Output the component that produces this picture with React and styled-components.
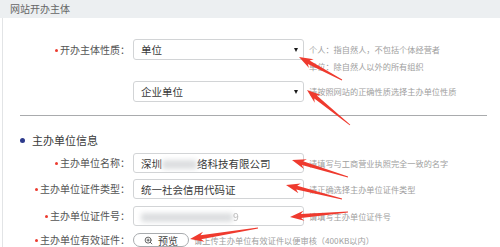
import React from 'react';
import styled, { createGlobalStyle } from 'styled-components';
import { ZoomIn } from 'lucide-react';

const GlobalStyle = createGlobalStyle`
  html, body {
    margin: 0;
    padding: 0;
    background: #fff;
  }
  body {
    font-family: "Noto Sans CJK SC", "Noto Sans", sans-serif;
    color: #333;
  }
`;

const Page = styled.div`
  position: relative;
  width: 500px;
  height: 247px;
  overflow: hidden;
  background: #fff;
`;

const Header = styled.div`
  height: 18px;
  line-height: 18px;
  padding-left: 10px;
  background: #eceff1;
  font-size: 10px;
  color: #666;
`;

const Panel = styled.div`
  margin-left: 2px;
  border-left: 1px solid #e2e4e6;
  height: 229px;
  padding-top: 21px;
  box-sizing: border-box;
`;

const Row = styled.div`
  display: grid;
  grid-template-columns: 127px 171px 1fr;
  column-gap: 3px;
  align-items: ${p => (p.$top ? 'start' : 'center')};
  margin-top: ${p => p.$mt || 0}px;
`;

const Label = styled.div`
  text-align: right;
  font-size: 10px;
  color: #555;
  line-height: ${p => p.$lh || 20}px;
  white-space: nowrap;

  &::before {
    content: '';
    display: ${p => (p.$required ? 'inline-block' : 'none')};
    width: 3px;
    height: 3px;
    border-radius: 50%;
    background: #ec3b2f;
    margin-right: 2px;
    vertical-align: middle;
    position: relative;
    top: -1px;
  }
`;

const Field = styled.div`
  height: ${p => p.$h || 20}px;
  box-sizing: border-box;
  border: 1px solid #d2d4d6;
  border-radius: 3px;
  background: #fff;
  display: flex;
  align-items: center;
  justify-content: space-between;
  padding: 0 5px 0 7px;
  font-size: 10.5px;
  color: #3a3a3a;
  white-space: nowrap;
  overflow: hidden;
`;

const Caret = styled.span`
  width: 0;
  height: 0;
  border-left: 2.5px solid transparent;
  border-right: 2.5px solid transparent;
  border-top: 4px solid #1a1a1a;
`;

const Blur = styled.span`
  display: inline-block;
  width: ${p => p.$w}px;
  height: 9px;
  background: #dcdee0;
  filter: blur(2.5px);
  border-radius: 3px;
  vertical-align: middle;
`;

const Faint = styled.span`
  color: #bcbcbc;
  filter: blur(0.6px);
`;

const Hint = styled.div`
  padding-left: 2px;
  font-size: 8.2px;
  line-height: ${p => p.$lh || 17}px;
  color: #a0a0a0;
  white-space: nowrap;
  margin-top: ${p => p.$mt || 0}px;
`;

const Divider = styled.div`
  height: 1px;
  background: #a9abad;
  margin: 13px 13px 0 17px;
`;

const SectionTitle = styled.div`
  display: flex;
  align-items: center;
  margin: 14px 0 0 17px;
  height: 20px;
  font-size: 11px;
  color: #3a3a3a;

  &::before {
    content: '';
    width: 5px;
    height: 5px;
    border-radius: 50%;
    background: #2d3a8c;
    margin-right: 7px;
  }
`;

const Controls = styled.div`
  grid-column: 2 / 4;
  display: flex;
  align-items: center;
  gap: 3px;
`;

const PreviewButton = styled.button`
  width: 56px;
  height: 14px;
  box-sizing: border-box;
  border: 1px solid #a8abae;
  border-radius: 8px;
  background: #fff;
  display: inline-flex;
  align-items: center;
  justify-content: center;
  gap: 5px;
  padding: 0;
  font-family: inherit;
  font-size: 10px;
  color: #444;
`;

const Overlay = styled.svg`
  position: absolute;
  left: 0;
  top: 0;
  pointer-events: none;
`;

// annotation arrows: tip x, tip y, tail x, tail y
const arrows = [
  [299, 57, 342, 80],
  [307, 90, 350, 125],
  [292, 160, 348, 177],
  [286, 185, 342, 199],
  [290, 217, 348, 212],
  [190, 239, 258, 228],
];

function arrowPoints([tx, ty, ex, ey]) {
  const len = Math.hypot(ex - tx, ey - ty);
  const ux = (ex - tx) / len;
  const uy = (ey - ty) / len;
  const nx = -uy;
  const ny = ux;
  const H = 14;
  const W = 5;
  const bx = tx + ux * H;
  const by = ty + uy * H;
  const ix = tx + ux * (H - 3);
  const iy = ty + uy * (H - 3);
  const pts = [
    [tx, ty],
    [bx + nx * W, by + ny * W],
    [ix + nx * 2, iy + ny * 2],
    [ex + nx * 0.4, ey + ny * 0.4],
    [ex - nx * 0.4, ey - ny * 0.4],
    [ix - nx * 2, iy - ny * 2],
    [bx - nx * W, by - ny * W],
  ];
  return pts.map(p => p.map(v => v.toFixed(1)).join(',')).join(' ');
}

const App = () => (
  <Page>
    <GlobalStyle />
    <Header>网站开办主体</Header>
    <Panel>
      <Row $top>
        <Label $required $lh={21}>开办主体性质：</Label>
        <Field $h={21}>
          单位
          <Caret />
        </Field>
        <Hint $mt={2}>
          个人：指自然人，不包括个体经营者
          <br />
          单位：除自然人以外的所有组织
        </Hint>
      </Row>
      <Row $mt={6}>
        <Label />
        <Field $h={21}>
          企业单位
          <Caret />
        </Field>
        <Hint>请按照网站的正确性质选择主办单位性质</Hint>
      </Row>
      <Divider />
      <SectionTitle>主办单位信息</SectionTitle>
      <Row $mt={3}>
        <Label $required>主办单位名称：</Label>
        <Field>
          <span>
            深圳<Blur $w={35} />络科技有限公司
          </span>
        </Field>
        <Hint>请填写与工商营业执照完全一致的名字</Hint>
      </Row>
      <Row $mt={6}>
        <Label $required>主办单位证件类型：</Label>
        <Field>统一社会信用代码证</Field>
        <Hint>请正确选择主办单位证件类型</Hint>
      </Row>
      <Row $mt={7}>
        <Label $required>主办单位证件号：</Label>
        <Field>
          <span>
            <Blur $w={92} />
            <Faint>9</Faint>
          </span>
        </Field>
        <Hint>请填写主办单位证件号</Hint>
      </Row>
      <Row $mt={7}>
        <Label $required $lh={14}>主办单位有效证件：</Label>
        <Controls>
          <PreviewButton>
            <ZoomIn size={9} strokeWidth={2.4} color="#555" />
            预览
          </PreviewButton>
          <Hint $lh={14}>请上传主办单位有效证件以便审核（400KB以内）</Hint>
        </Controls>
      </Row>
    </Panel>
    <Overlay width="500" height="247" viewBox="0 0 500 247">
      {arrows.map((a, i) => (
        <polygon key={i} points={arrowPoints(a)} fill="#ef3a2e" />
      ))}
    </Overlay>
  </Page>
);

export default App;
